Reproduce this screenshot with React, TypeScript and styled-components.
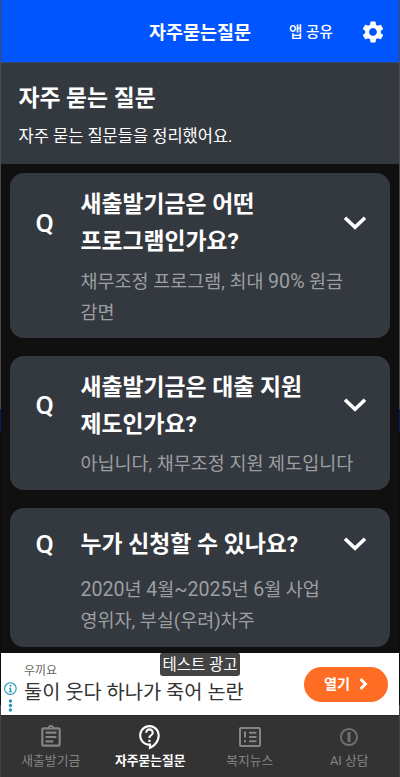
import React from "react";
import styled, { createGlobalStyle } from "styled-components";
import { MdSettings, MdOutlineAssignment, MdOutlineContactSupport } from "react-icons/md";

const GlobalStyle = createGlobalStyle`
  * { box-sizing: border-box; }
  body { margin: 0; background: #101010; }
  h1, h2, p { margin: 0; font-weight: inherit; }
  button { border: 0; padding: 0; background: none; color: inherit; font: inherit; }
`;

const Screen = styled.div`
  width: 400px;
  height: 777px;
  padding: 0 1px;
  background: linear-gradient(#4a4a4a 0 409px, #001f5c 409px 432px, #0c0c0c 432px 705px, #444 705px);
  font-family: Roboto, "Noto Sans CJK KR", sans-serif;
  color: #fff;
  display: flex;
  flex-direction: column;
  overflow: hidden;
  white-space: nowrap;
`;

const TopBar = styled.header`
  flex: 0 0 62px;
  background: #0055ff;
  display: grid;
  grid-template-columns: 1fr 102px 1fr;
  align-items: center;
  padding-top: 2px;
`;

const BarTitle = styled.h1`
  grid-column: 2;
  padding-top: 2px;
  font-size: 18.5px;
  line-height: 26px;
  font-weight: 700;
`;

const BarActions = styled.div`
  display: flex;
  align-items: center;
  justify-content: space-between;
  padding: 0 13px 0 38px;
`;

const ShareButton = styled.button`
  font-size: 14.6px;
  line-height: 22px;
  font-weight: 500;
`;

const GearButton = styled.button`
  display: flex;
`;

const Intro = styled.section`
  flex: 0 0 102px;
  background: #34393f;
  border-top: 1px solid #34476b;
  padding: 18px 17.5px 0;
`;

const IntroTitle = styled.h2`
  font-size: 22.8px;
  line-height: 36px;
  font-weight: 700;
`;

const IntroText = styled.p`
  margin-top: 7px;
  font-size: 16.5px;
  line-height: 26px;
`;

const FaqList = styled.main`
  flex: 0 0 489px;
  background: #101010;
  padding: 9.4px 9px 0;
  display: flex;
  flex-direction: column;
  gap: 17.6px;
  overflow: hidden;
`;

const Card = styled.article`
  background: #34393f;
  border-radius: 14px;
  padding: 12px 23px 9.5px 25.5px;
`;

const CardHead = styled.div`
  min-height: 49px;
  display: grid;
  grid-template-columns: 45px 1fr 24px;
  align-items: center;
`;

const Mark = styled.span`
  font-size: 26.5px;
  font-weight: 500;
  line-height: 30px;
`;

const Question = styled.h2`
  padding-top: 1px;
  font-size: 22.85px;
  line-height: 37px;
  font-weight: 700;
`;

const Answer = styled.p`
  margin: 6.5px 0 0 45px;
  font-size: 18.5px;
  line-height: 31px;
  color: #9c9fa2;
`;

const Figure = styled.span`
  font-size: 19.6px;
  line-height: 1;
`;

const Ad = styled.aside`
  position: relative;
  flex: 0 0 62px;
  background: #fff;
  color: #333;
  display: grid;
  grid-template-columns: 23px 1fr 84px;
  padding-right: 11px;
`;

const AdMarks = styled.div`
  display: flex;
  padding: 28px 0 0 2px;
`;

const AdCopy = styled.div`
  padding-top: 10px;
`;

const AdBrand = styled.p`
  font-size: 12px;
  line-height: 17px;
  color: #666;
`;

const AdHeadline = styled.p`
  font-size: 19.8px;
  line-height: 26px;
`;

const TestBadge = styled.span`
  position: absolute;
  left: 159px;
  top: 0;
  width: 80px;
  height: 23px;
  border-radius: 2px 2px 3px 3px;
  background: #444;
  color: #fff;
  font-size: 15.5px;
  line-height: 24px;
  text-align: center;
`;

const OpenButton = styled.button`
  margin-top: 13.5px;
  width: 84px;
  height: 35px;
  border-radius: 18px;
  background: #ff6d25;
  color: #fff;
  font-size: 14.2px;
  font-weight: 700;
  line-height: 20px;
  padding-bottom: 1px;
  display: flex;
  align-items: center;
  justify-content: center;
  gap: 9px;
`;

const Tabs = styled.nav`
  flex: 0 0 62px;
  background: #333;
  border-top: 1px solid #292929;
  display: grid;
  grid-template-columns: repeat(4, 1fr);
`;

const Tab = styled.button<{ $active?: boolean }>`
  display: flex;
  flex-direction: column;
  align-items: center;
  padding-top: 7px;
  font-size: 12.8px;
  line-height: 22px;
  font-weight: ${(p) => (p.$active ? 700 : 400)};
  color: ${(p) => (p.$active ? "#fff" : "#858585")};
`;

const TabIcon = styled.span`
  height: 27px;
  display: flex;
  align-items: center;
`;

const Chevron = () => (
  <svg width="24" height="16" viewBox="0 0 24 16" fill="none" stroke="#fff" strokeWidth="3.6">
    <path d="M2 2.7 12 12.3 22 2.7" />
  </svg>
);

const AdChoices = () => (
  <svg width="15" height="32" viewBox="0 0 15 32" fill="#2196b5">
    <circle cx="7.4" cy="7.6" r="5.8" fill="none" stroke="#2196b5" strokeWidth="1.1" />
    <circle cx="7.4" cy="4.8" r="1" />
    <path d="M6 6.7h2.2v3.6h1v1H5.8v-1h1V7.7H6z" />
    <circle cx="7.4" cy="20" r="1.7" />
    <circle cx="7.4" cy="24.5" r="1.7" />
    <circle cx="7.4" cy="29" r="1.7" />
  </svg>
);

const NewsIcon = () => (
  <svg width="24" height="22" viewBox="0 0 24 22" fill="none" stroke="currentColor" strokeWidth="2">
    <rect x="2" y="2" width="20" height="18" rx="1" />
    <path d="M7 5.5v6M7 14v2.3M11 6.8h7.5M11 11h7.5M11 15.2h7.5" />
  </svg>
);

const InfoIcon = () => (
  <svg width="20" height="20" viewBox="0 0 20 20" fill="none" stroke="#707070">
    <circle cx="10" cy="10" r="8.1" strokeWidth="2" />
    <path d="M10 5v10" strokeWidth="3" />
  </svg>
);

const faqs = [
  {
    question: ["새출발기금은 어떤", "프로그램인가요?"],
    answer: ["채무조정 프로그램, 최대 90% 원금", "감면"],
  },
  {
    question: ["새출발기금은 대출 지원", "제도인가요?"],
    answer: ["아닙니다, 채무조정 지원 제도입니다"],
  },
  {
    question: ["누가 신청할 수 있나요?"],
    answer: ["2020년 4월~2025년 6월 사업", "영위자, 부실(우려)차주"],
  },
];

const tabs = [
  { label: "새출발기금", icon: <MdOutlineAssignment size={26} /> },
  { label: "자주묻는질문", icon: <MdOutlineContactSupport size={26} />, active: true },
  { label: "복지뉴스", icon: <NewsIcon /> },
  { label: "AI 상담", icon: <InfoIcon /> },
];

// Figures are set slightly larger than the Hangul around them.
const withFigures = (line: string) =>
  line.split(/([\d%~]+)/).map((part, i) => (i % 2 ? <Figure key={i}>{part}</Figure> : part));

const Lines = ({ items }: { items: string[] }) => (
  <>
    {items.map((line, i) => (
      <React.Fragment key={line}>
        {i > 0 && <br />}
        {withFigures(line)}
      </React.Fragment>
    ))}
  </>
);

export default function App() {
  return (
    <>
      <GlobalStyle />
      <Screen>
        <TopBar>
          <BarTitle>자주묻는질문</BarTitle>
          <BarActions>
            <ShareButton>앱 공유</ShareButton>
            <GearButton aria-label="설정">
              <MdSettings size={26} />
            </GearButton>
          </BarActions>
        </TopBar>
        <Intro>
          <IntroTitle>자주 묻는 질문</IntroTitle>
          <IntroText>자주 묻는 질문들을 정리했어요.</IntroText>
        </Intro>
        <FaqList>
          {faqs.map((faq) => (
            <Card key={faq.question[0]}>
              <CardHead>
                <Mark>Q</Mark>
                <Question>
                  <Lines items={faq.question} />
                </Question>
                <Chevron />
              </CardHead>
              <Answer>
                <Lines items={faq.answer} />
              </Answer>
            </Card>
          ))}
        </FaqList>
        <Ad>
          <AdMarks>
            <AdChoices />
          </AdMarks>
          <AdCopy>
            <AdBrand>우끼요</AdBrand>
            <AdHeadline>둘이 웃다 하나가 죽어 논란</AdHeadline>
          </AdCopy>
          <OpenButton>
            열기
            <svg width="9" height="14" viewBox="0 0 9 14" fill="none" stroke="#fff" strokeWidth="2.8">
              <path d="m1.5 2 5 5-5 5" />
            </svg>
          </OpenButton>
          <TestBadge>테스트 광고</TestBadge>
        </Ad>
        <Tabs>
          {tabs.map((tab) => (
            <Tab key={tab.label} $active={tab.active}>
              <TabIcon>{tab.icon}</TabIcon>
              {tab.label}
            </Tab>
          ))}
        </Tabs>
      </Screen>
    </>
  );
}
